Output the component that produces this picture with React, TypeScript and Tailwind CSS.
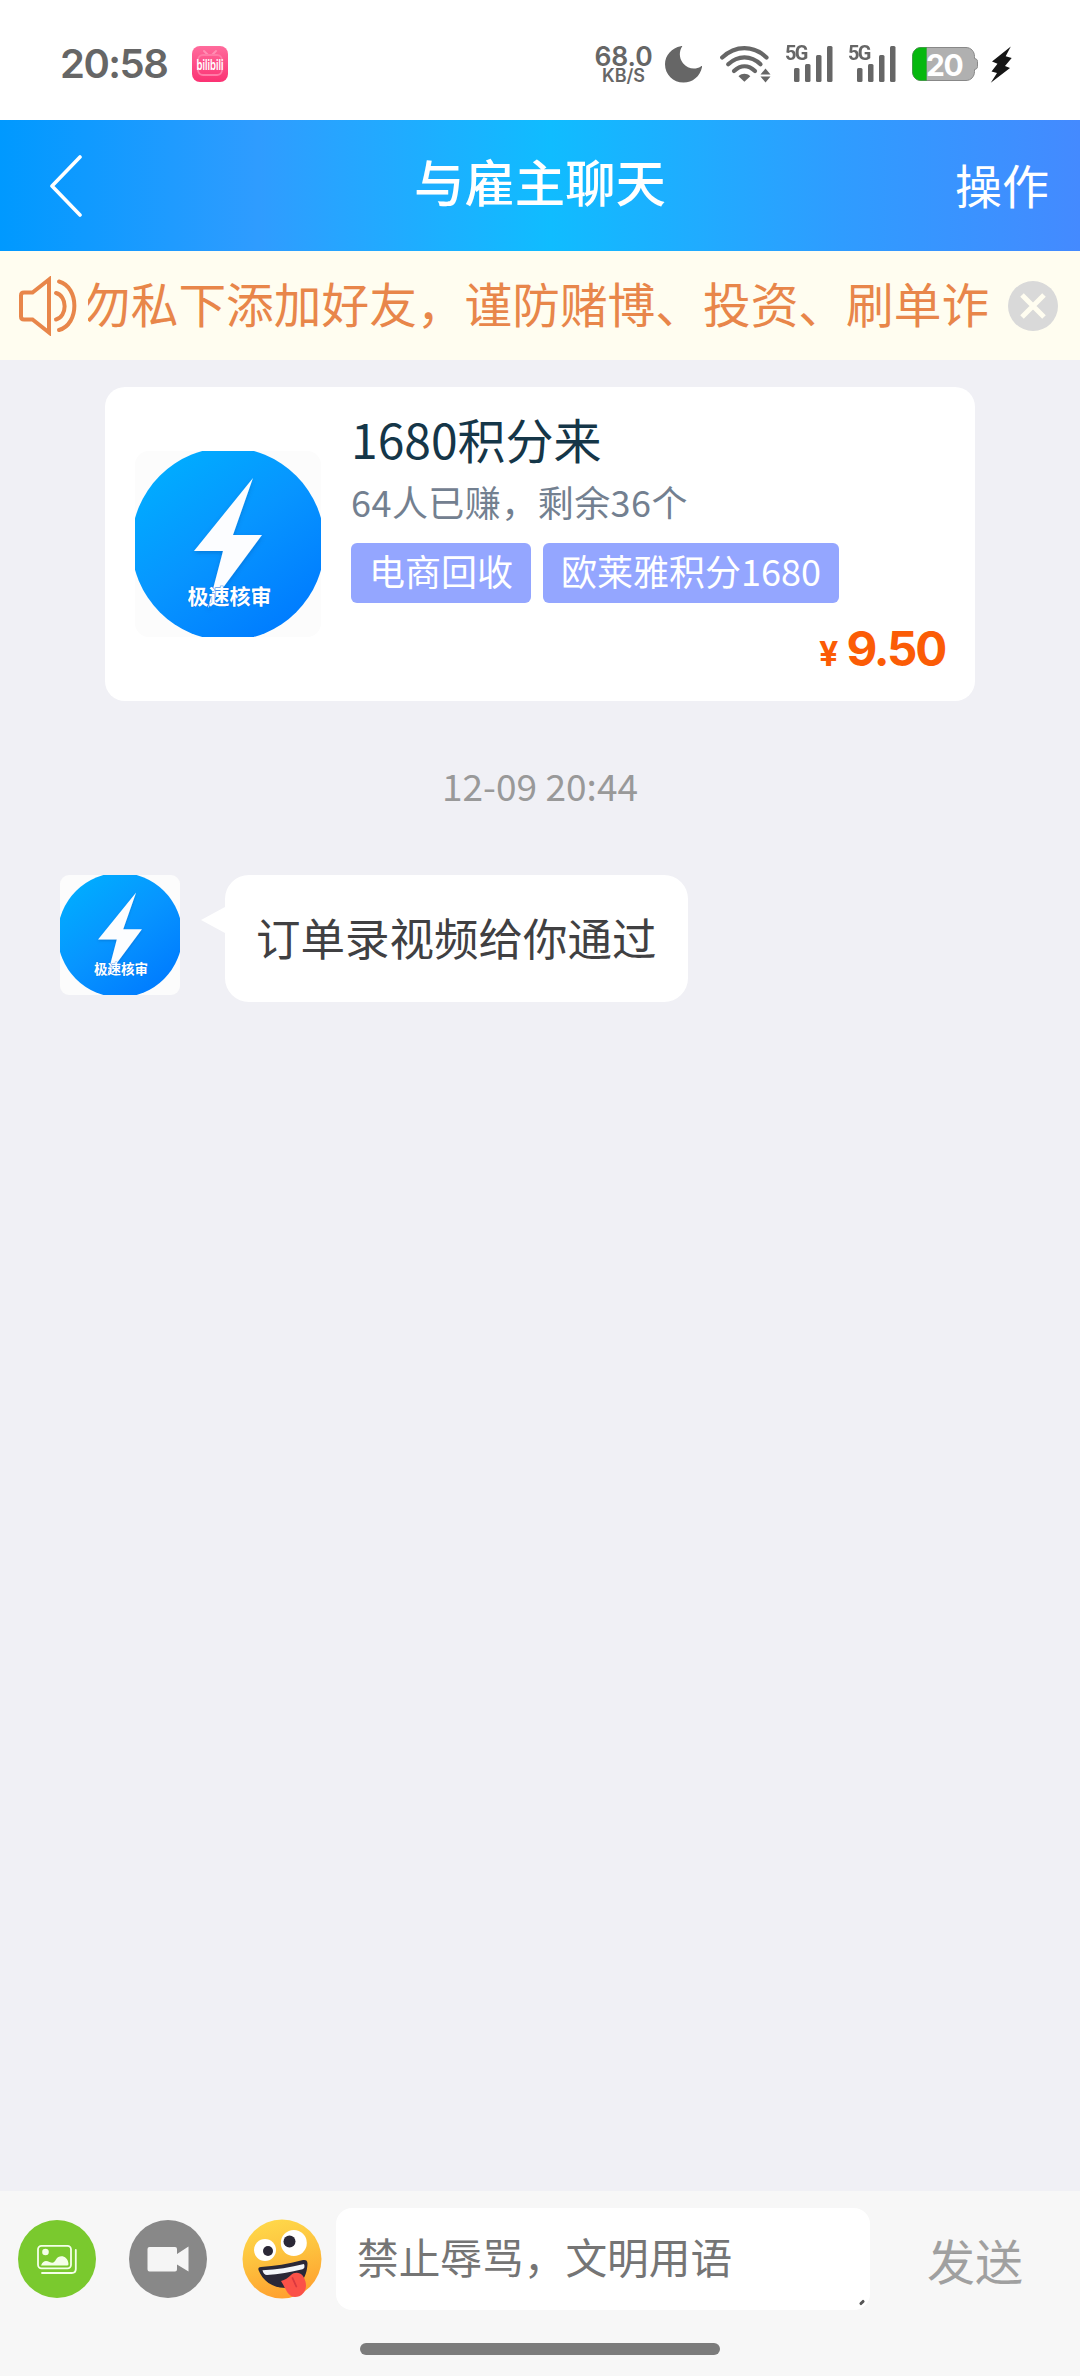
import React, { useState } from 'react';

interface Order {
  title: string;
  done: number;
  left: number;
  tags: string[];
  price: string;
}

const order: Order = {
  title: '1680积分来',
  done: 64,
  left: 36,
  tags: ['电商回收', '欧莱雅积分1680'],
  price: '9.50',
};

const messages = [{ id: 1, text: '订单录视频给你通过' }];

const BiliIcon = () => (
  <svg viewBox="0 0 36 36" className="h-9 w-9">
    <defs>
      <linearGradient id="bili" x1="0" y1="0" x2="0" y2="1">
        <stop offset="0" stopColor="#ff6b9c" />
        <stop offset="1" stopColor="#fb3273" />
      </linearGradient>
    </defs>
    <rect width="36" height="36" rx="8" fill="url(#bili)" />
    <path d="M12 5l4 4M24 5l-4 4" stroke="#ff8fb4" strokeWidth="2" strokeLinecap="round" />
    <rect x="6" y="9" width="24" height="20" rx="5" fill="none" stroke="#ff7aa6" strokeWidth="1.8" />
    <text x="18" y="24" textAnchor="middle" textLength="27" lengthAdjust="spacingAndGlyphs" fontFamily="Inter, sans-serif" fontSize="14" fontWeight="600" fill="#fff">
      bilibili
    </text>
  </svg>
);

const MoonIcon = () => (
  <svg viewBox="0 0 37 37" className="h-[37px] w-[37px]" fill="#666">
    <path d="M17.3.2C14 5 13.8 12 18 17.2c4.500 5.300 12 7 17.800 3.200 1-.6 1.500-.2 1.200.9C35 30.500 27.500 36.600 18.500 36.600 8.200 36.600 0 28.500 0 18.200 0 9.200 7 1.600 15.800.2c.6-.1 1-.2 1.500 0z" />
  </svg>
);

const WifiIcon = () => (
  <svg viewBox="0 0 52 37" className="h-[37px] w-[52px]" fill="none" stroke="#666" strokeWidth="4.200" strokeLinecap="round">
    <path d="M2.200 11.500C15.500-1 33.500-1 46.500 11.500" />
    <path d="M8.200 18.300C18 9 31 9 40.500 18.300" />
    <path d="M14 25c6.500-6.300 14.500-6.300 21 0" />
    <path d="M18.500 30.200c3.800-3.200 8-3.200 11.800 0l-5.900 5.500z" fill="#666" stroke="none" />
    <path d="M45.500 22.500l5 6h-10zM45.500 36.500l5-6h-10z" fill="#666" stroke="none" />
  </svg>
);

const SignalIcon = () => (
  <div className="relative h-9 w-12">
    <span className="absolute -top-px left-0 origin-left scale-x-95 font-['Roboto'] text-[21px] leading-4 font-bold tracking-[-1.8px]">5G</span>
    <svg viewBox="0 0 48 36" className="h-9 w-12" fill="#666">
      <rect x="9" y="22" width="5.500" height="14" rx="1.500" />
      <rect x="20" y="18" width="5.500" height="18" rx="1.500" />
      <rect x="31" y="9" width="5.500" height="27" rx="1.500" />
      <rect x="42" y="0" width="5.500" height="36" rx="1.500" />
    </svg>
  </div>
);

const BatteryIcon = () => (
  <div className="relative h-[34px] w-[66px]">
    <svg viewBox="0 0 66 34" className="h-[34px] w-[66px]">
      <path d="M9 .5h45c5 0 8.500 4 8.500 9v2c2 .3 3 1.300 3 3v5c0 1.700-1 2.700-3 3v2c0 5-3.500 9-8.500 9H9c-5 0-8.500-4-8.500-9v-15C.5 4.500 4 .5 9 .5z" fill="#b0b0b0" stroke="#888" />
      <path d="M14.500.5H9C4 .5.5 4.500.5 9.500v15c0 5 3.500 9 8.500 9h5.500z" fill="#06b80f" stroke="#3a9a40" strokeWidth=".6" />
    </svg>
    <span className="absolute top-0 left-[14px] font-['Inter'] text-[30px] leading-9 font-bold tracking-[-1.500px] text-white">20</span>
  </div>
);

const BoltIcon = () => (
  <svg viewBox="0 0 22 37" className="h-[37px] w-[22px]" fill="#161616">
    <path d="M20.800.5L2 15.500l5.500 2.300-6 7.700 5.500 1.500L.8 36.800 20 22l-5-2 6.700-8-6-1.700z" />
  </svg>
);

// Shared picture of the employer, drawn at any size
const Avatar: React.FC<{ className: string }> = ({ className }) => (
  <svg viewBox="0 0 186 186" className={className}>
    <defs>
      <linearGradient id="face" x1="0.1" y1="0.1" x2="0.75" y2="0.95">
        <stop offset="0" stopColor="#00adff" />
        <stop offset="0.5" stopColor="#0795ff" />
        <stop offset="1" stopColor="#007dff" />
      </linearGradient>
      <filter id="soft" x="-20%" y="-20%" width="140%" height="140%">
        <feDropShadow dx="0" dy="2" stdDeviation="2" floodColor="#004a9e" floodOpacity="0.35" />
      </filter>
    </defs>
    <rect width="186" height="186" rx="14" fill="#fcfcfc" />
    <clipPath id="box"><rect width="186" height="186" /></clipPath>
    <circle cx="93" cy="93" r="96.500" fill="url(#face)" clipPath="url(#box)" />
    <path d="M118 27L59 100h29l-15 57 54-73H98z" fill="#fcfdff" filter="url(#soft)" />
    <text x="94.500" y="153" textAnchor="middle" fontFamily="'Noto Sans CJK SC', sans-serif" fontSize="21" fontWeight="700" fill="#fff" stroke="#0873e8" strokeWidth=".8" paintOrder="stroke">
      极速核审
    </text>
  </svg>
);

const SpeakerIcon = () => (
  <svg viewBox="0 0 58 60" className="h-[60px] w-[58px] shrink-0" fill="none" stroke="#e8864a" strokeWidth="4">
    <path d="M30 3.500L13.500 16.500H5q-3 0-3 3v21q0 3 3 3h8.500L30 56.500z" strokeLinejoin="miter" />
    <path d="M37 17c11.500 3 11.500 23.500 0 26.500M40 5.500c20.500 5.500 20.500 43 0 48.500" strokeLinecap="round" />
  </svg>
);

const PhotoIcon = () => (
  <svg viewBox="0 0 78 78" className="h-[78px] w-[78px]">
    <circle cx="39" cy="39" r="39" fill="#7ac92e" />
    <g fill="none" stroke="#f4ffe8" strokeWidth="1.800" strokeLinecap="round">
      <rect x="20" y="25.800" width="33" height="22.500" rx="3.500" />
      <path d="M57.800 30v19q0 4-4 4H24" />
    </g>
    <circle cx="27.500" cy="32" r="3.300" fill="#f4ffe8" />
    <path d="M23 45.500c2.500-6 6-4.500 8.500-3.500 3.500 1.500 5 .5 6.500-2.500 3-5.500 12-4 12.500 4.500q0 1.500-1.500 1.500z" fill="#f4ffe8" />
  </svg>
);

const VideoIcon = () => (
  <svg viewBox="0 0 78 78" className="h-[78px] w-[78px]">
    <circle cx="39" cy="39" r="39" fill="#888" />
    <path d="M20.500 27h25.500q2 0 2 2v5l11.500-7.500v25l-11.500-7v5q0 2-2 2h-25.500q-2 0-2-2v-20.500q0-2 2-2z" fill="#f5f5f5" />
  </svg>
);

const EmojiIcon = () => (
  <svg viewBox="0 0 80 80" className="h-20 w-20">
    <defs>
      <linearGradient id="skin" x1="0.35" y1="0" x2="0.6" y2="1">
        <stop offset="0" stopColor="#ffd84a" />
        <stop offset="0.45" stopColor="#fdc23e" />
        <stop offset="1" stopColor="#ff9f2e" />
      </linearGradient>
    </defs>
    <circle cx="40" cy="40" r="39.500" fill="url(#skin)" />
    <circle cx="23" cy="31" r="11" fill="#fff" />
    <circle cx="51.800" cy="24" r="13" fill="#fff" />
    <circle cx="26" cy="32" r="5" fill="#2b2837" />
    <circle cx="47.500" cy="22.500" r="6" fill="#2b2837" />
    <path d="M19 48c14-.8 27-3 41-6.700 3.500-.8 5.500 0 5.500 3.200C65 60 57 69 44 69c-14 0-23.500-7.500-27.500-18-.6-2 .5-3 2.500-3z" fill="#2b2837" />
    <path d="M20.500 51.200c14-.5 28-2.700 41.500-6.200 1 2.500.5 4.800-1.500 5.300-12 3-24 5-35.500 5.700-2.200 0-3.900-2-4.500-4.800z" fill="#f4f6fa" />
    <path d="M39 62c4-1 7-3 10-6 2.500-2.500 6-3 9-1.500 3.500 1.500 6 7 6 12 0 6.500-4.500 11.500-11 11.500C46 78 44 70 39 62z" fill="#fb5148" />
    <path d="M50.500 59l3.800 8.500" stroke="#d93840" strokeWidth="1.800" strokeLinecap="round" />
  </svg>
);

const App: React.FC = () => {
  const [draft, setDraft] = useState('');
  const [noticeOpen, setNoticeOpen] = useState(true);

  return (
    <div className="flex h-[2376px] w-[1080px] flex-col overflow-hidden bg-[#f0f0f5] font-['Noto_Sans_CJK_SC',sans-serif]">
      {/* Status bar */}
      <div className="flex h-[120px] shrink-0 items-center bg-white pt-2 pr-[68px] pl-[60px] text-[#666]">
        <span className="w-[108px] font-['Inter'] text-[40px] leading-none font-semibold tracking-[-1.500px]">20:58</span>
        <div className="ml-6"><BiliIcon /></div>
        <div className="ml-auto flex items-center">
          <div className="mr-3 flex w-[59px] flex-col items-center pt-0.5 font-['Inter'] leading-none font-semibold whitespace-nowrap">
            <span className="text-[26.500px] leading-[21px] tracking-[-0.100px]">68.0</span>
            <span className="text-[18px] leading-[18px]">KB/S</span>
          </div>
          <MoonIcon />
          <div className="ml-[18px]"><WifiIcon /></div>
          <div className="ml-[13px]"><SignalIcon /></div>
          <div className="ml-[15px]"><SignalIcon /></div>
          <div className="ml-4"><BatteryIcon /></div>
          <div className="ml-3"><BoltIcon /></div>
        </div>
      </div>

      {/* Header */}
      <header className="grid h-[131px] shrink-0 grid-cols-3 items-center bg-[linear-gradient(90deg,#0099ff_0%,#2f9cff_24%,#10bcff_51%,#2f9cff_78%,#448aff_100%)] pr-[31px] pl-[50px] text-white">
        <button>
          <svg viewBox="0 0 32 62" className="h-[62px] w-8" fill="none" stroke="#fff" strokeWidth="3.600" strokeLinecap="round" strokeLinejoin="round">
            <path d="M30 2L2 31l28 29" />
          </svg>
        </button>
        <h1 className="-mt-[9px] -ml-[19px] text-center text-[50.400px] leading-none font-medium whitespace-nowrap">与雇主聊天</h1>
        <button className="-mt-[5px] text-right text-[47px] leading-none">操作</button>
      </header>

      {/* Notice */}
      {noticeOpen && (
        <div className="flex h-[109px] shrink-0 items-center bg-[#fffdf0] pr-[22px] pl-[19px]">
          <SpeakerIcon />
          <div className="ml-[11px] flex w-[900px] overflow-hidden pb-1.5">
            <p className="-ml-[5px] text-[47.700px] leading-[60px] whitespace-nowrap text-[#e8864a]">勿私下添加好友，谨防赌博、投资、刷单诈</p>
          </div>
          <button className="ml-auto" onClick={() => setNoticeOpen(false)}>
            <svg viewBox="0 0 50 50" className="h-[50px] w-[50px]">
              <circle cx="25" cy="25" r="25" fill="#d9d9d9" />
              <path d="M14 14l22 22M36 14L14 36" stroke="#fffdf0" strokeWidth="5" />
            </svg>
          </button>
        </div>
      )}

      {/* Chat */}
      <main className="flex-1">
        <section className="mx-auto mt-[27px] flex h-[314px] w-[870px] rounded-[20px] bg-white px-[30px]">
          <Avatar className="mt-16 h-[186px] w-[186px]" />
          <div className="ml-[30px] flex flex-1 flex-col pt-[19px]">
            <h2 className="text-[48px] leading-[64px] text-[#153648]">{order.title}</h2>
            <p className="mt-[7px] text-[36px] leading-[48px] tracking-[0.450px] text-[#738090]">
              {order.done}人已赚，剩余{order.left}个
            </p>
            <div className="mt-[18px] flex gap-3">
              {order.tags.map((tag) => (
                <span key={tag} className="h-[60px] rounded-md bg-[#94a6ff] px-[18px] text-[36px] leading-[55px] text-white">
                  {tag}
                </span>
              ))}
            </div>
            <div className="mt-[18px] flex items-baseline justify-end font-['Inter'] leading-[56px] font-bold text-[#fb5c06]">
              <span className="mr-2 text-[34px]">¥</span>
              <span className="text-[47.500px] tracking-[-2.200px]">{order.price}</span>
            </div>
          </div>
        </section>

        <time className="mt-[59px] block text-center text-[37px] leading-[50px] tracking-[0.050px] text-[#999]">12-09 20:44</time>

        {messages.map((message) => (
          <div key={message.id} className="mt-[65px] flex items-start pl-[60px]">
            <Avatar className="h-[120px] w-[120px]" />
            <svg viewBox="0 0 24 26" className="mt-8 ml-[21px] h-[26px] w-6" fill="#fff">
              <path d="M24 0v26L0 13z" />
            </svg>
            <p className="h-[127px] rounded-3xl bg-white px-[31px] text-[44.500px] leading-[123px] text-[#404042]">{message.text}</p>
          </div>
        ))}
      </main>

      {/* Input bar */}
      <footer className="h-[185px] shrink-0 bg-[#f7f7f7] pt-[17px]">
        <div className="flex h-[102px] items-center pl-[18px]">
          <button><PhotoIcon /></button>
          <button className="ml-[33px]"><VideoIcon /></button>
          <button className="ml-[35px]"><EmojiIcon /></button>
          <div className="relative ml-[14px] h-[102px] w-[534px] rounded-2xl bg-white">
            <textarea
              rows={1}
              value={draft}
              onChange={(e) => setDraft(e.target.value)}
              placeholder="禁止辱骂，文明用语"
              className="block h-[102px] w-full resize-none overflow-hidden bg-transparent pt-[17px] pl-[21px] text-[41.700px] leading-[62px] text-[#404042] outline-none placeholder:text-[#757575]"
            />
            <span className="absolute right-[5px] bottom-1.5 h-[3px] w-1.5 -rotate-45 rounded-full bg-[#555]" />
          </div>
          <button className="ml-[57px] text-[48px] leading-[60px] text-[#a0a0a0]">发送</button>
        </div>
        <div className="mx-auto mt-[33px] h-3 w-[360px] rounded-full bg-[#7b7b7b]" />
      </footer>
    </div>
  );
};

export default App;
